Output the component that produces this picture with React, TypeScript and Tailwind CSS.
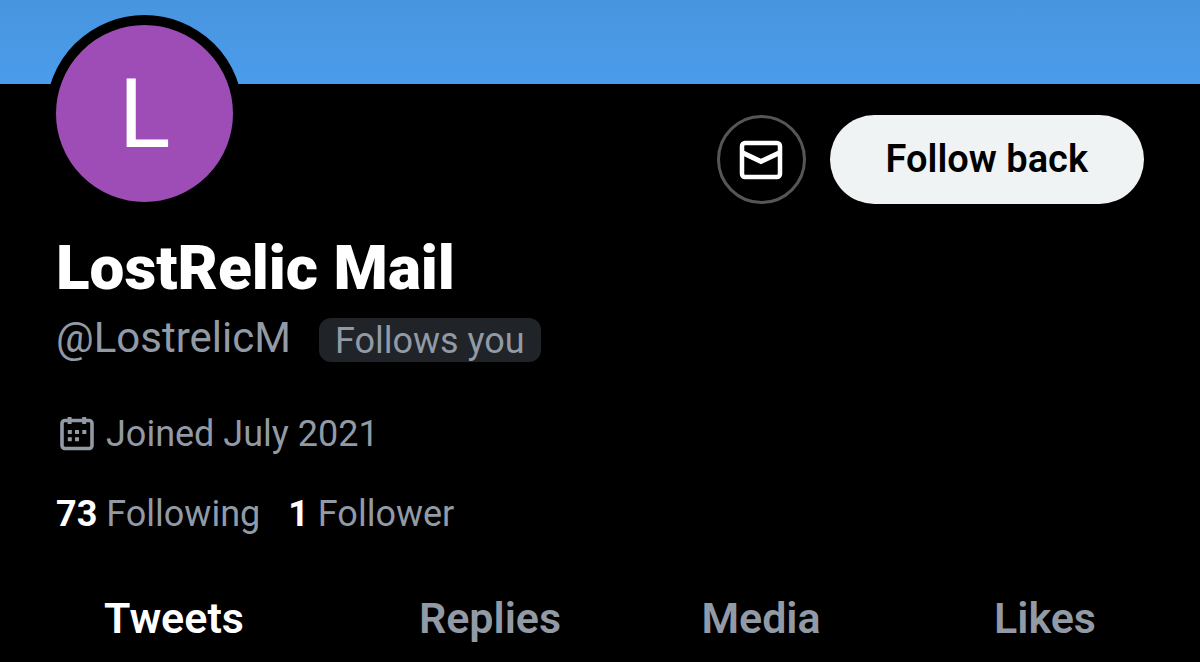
import { useState } from "react";

const tabs = ["Tweets", "Replies", "Media", "Likes"];

function MailIcon() {
    return (
        <svg width="44" height="40" viewBox="0 0 44 40" fill="none" stroke="currentColor" strokeWidth="4.500" aria-hidden="true">
            <rect x="3" y="3" width="38" height="34" rx="3" />
            <path d="M3 12.5L22 21.500L41 12.5" strokeWidth="5" />
        </svg>
    );
}

function CalendarIcon() {
    return (
        <svg width="34" height="34" viewBox="0 0 34 34" fill="none" aria-hidden="true">
            <rect x="2" y="3.500" width="30" height="28" rx="3" stroke="currentColor" strokeWidth="3.600" />
            <path
                fill="currentColor"
                d="M7.600 0h4v7h-4zM22.200 0h4v7h-4zM7.800 13h4v4h-4zM15 13h4v4h-4zM22.300 13h4v4h-4zM7.800 20.200h4v4h-4zM15 20.200h4v4h-4z"
            />
        </svg>
    );
}

const App: React.FC = () => {
    const [activeTab, setActiveTab] = useState("Tweets");

    return (
        <div className="min-h-screen bg-black text-[#929aa5] font-['Roboto','Noto_Sans',sans-serif]">
            <div className="h-[84px] bg-linear-to-b from-[#4895df] to-[#4b9ceb]"></div>

            <main className="px-14">
                <div className="flex items-start justify-between">
                    <div className="-mt-[69px] -ml-[10px] size-[197px] shrink-0 rounded-full border-10 border-black bg-[#9d4db5] flex items-center justify-center text-white text-8xl">
                        L
                    </div>
                    <div className="flex gap-6 pt-[31px]">
                        <button
                            aria-label="Message"
                            className="size-[89px] rounded-full border-3 border-[#55565a] text-white flex items-center justify-center"
                        >
                            <MailIcon />
                        </button>
                        <button className="h-[89px] px-14 rounded-full bg-[#eff3f4] text-black text-[38px] font-semibold">
                            Follow back
                        </button>
                    </div>
                </div>

                <h1 className="mt-6 text-white text-[62px] leading-[64px] font-black">LostRelic Mail</h1>

                <div className="mt-[14px] flex items-end gap-7">
                    <span className="text-[42px] leading-[48px]">@LostrelicM</span>
                    <span className="h-11 px-4 rounded-xl bg-[#202327] text-[36px] leading-[46px]">Follows you</span>
                </div>

                <div className="mt-12 flex items-center gap-3 pl-1 text-[36px] leading-[48px]">
                    <CalendarIcon />
                    <span>Joined July 2021</span>
                </div>

                <div className="mt-8 flex gap-7 text-[36px] leading-[48px]">
                    <a href="#following">
                        <span className="text-white font-bold">73</span> Following
                    </a>
                    <a href="#followers">
                        <span className="text-white font-bold">1</span> Follower
                    </a>
                </div>
            </main>

            <nav className="mt-14 grid grid-cols-[348fr_284fr_258fr_310fr]">
                {tabs.map((tab) => (
                    <button
                        key={tab}
                        onClick={() => setActiveTab(tab)}
                        className={`text-[43px] leading-[48px] font-semibold ${activeTab === tab ? "text-white" : ""}`}
                    >
                        {tab}
                    </button>
                ))}
            </nav>
        </div>
    );
};

export default App;
